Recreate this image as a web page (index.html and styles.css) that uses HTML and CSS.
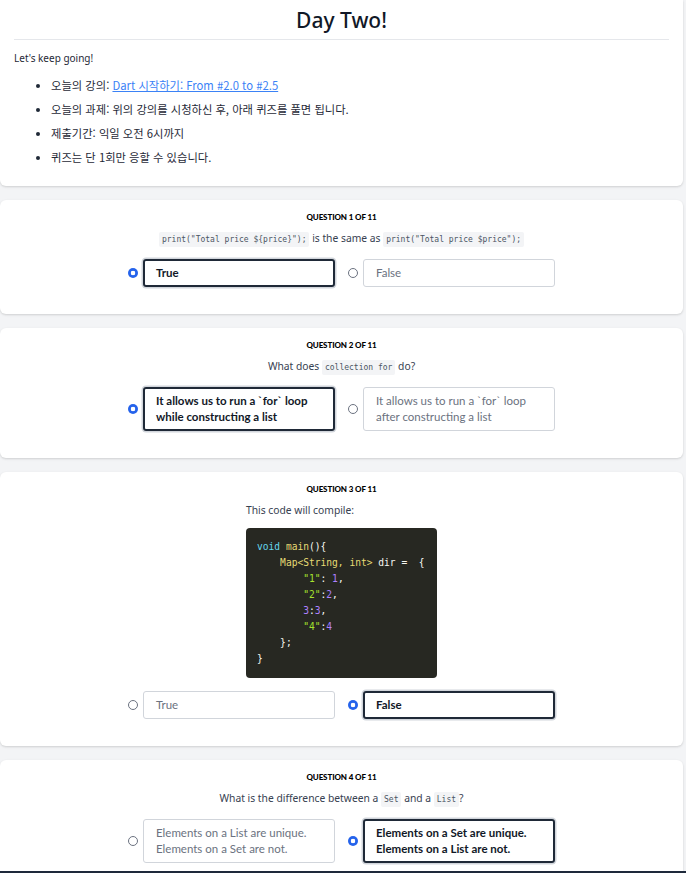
FILE: index.html
```html
<!DOCTYPE html>
<html lang="ko">
<head>
<meta charset="utf-8">
<title>Day Two!</title>
<link rel="stylesheet" href="styles.css">
</head>
<body>
<main class="page">
  <section class="card intro">
    <h1 class="title">Day Two!</h1>
    <p class="lead">Let's keep going!</p>
    <ul class="info">
      <li>오늘의 강의: <a href="#" class="link">Dart 시작하기: From #2.0 to #2.5</a></li>
      <li>오늘의 과제: 위의 강의를 시청하신 후, 아래 퀴즈를 풀면 됩니다.</li>
      <li>제출기간: 익일 오전 6시까지</li>
      <li>퀴즈는 단 1회만 응할 수 있습니다.</li>
    </ul>
  </section>

  <section class="card quiz">
    <div class="qlabel">Question 1 of 11</div>
    <div class="question"><code class="ic">print("Total price ${price}");</code> is the same as <code class="ic">print("Total price $price");</code></div>
    <div class="options">
      <label class="option"><span class="radio on"></span><span class="box on">True</span></label>
      <label class="option"><span class="radio"></span><span class="box">False</span></label>
    </div>
  </section>

  <section class="card quiz">
    <div class="qlabel">Question 2 of 11</div>
    <div class="question">What does <code class="ic">collection for</code> do?</div>
    <div class="options">
      <label class="option"><span class="radio on"></span><span class="box on">It allows us to run a `for` loop while constructing a list</span></label>
      <label class="option"><span class="radio"></span><span class="box">It allows us to run a `for` loop after constructing a list</span></label>
    </div>
  </section>

  <section class="card quiz">
    <div class="qlabel">Question 3 of 11</div>
    <div class="question md">
      <p class="md-text">This code will compile:</p>
<pre class="code"><span class="kw">void</span> <span class="fn">main</span>(){
    <span class="ty">Map&lt;String, int&gt;</span> dir =  {
        <span class="st">"1"</span>: <span class="nu">1</span>,
        <span class="st">"2"</span>:<span class="nu">2</span>,
        <span class="nu">3</span>:<span class="nu">3</span>,
        <span class="st">"4"</span>:<span class="nu">4</span>
    };
}</pre>
    </div>
    <div class="options">
      <label class="option"><span class="radio"></span><span class="box">True</span></label>
      <label class="option"><span class="radio on"></span><span class="box on">False</span></label>
    </div>
  </section>

  <section class="card quiz">
    <div class="qlabel">Question 4 of 11</div>
    <div class="question">What is the difference between a <code class="ic">Set</code> and a <code class="ic">List</code>?</div>
    <div class="options">
      <label class="option"><span class="radio"></span><span class="box">Elements on a List are unique. Elements on a Set are not.</span></label>
      <label class="option"><span class="radio on"></span><span class="box on">Elements on a Set are unique. Elements on a List are not.</span></label>
    </div>
  </section>
</main>
<div class="bottombar"></div>
</body>
</html>
```

FILE: styles.css
```css
* { box-sizing: border-box; }

html, body {
  margin: 0;
  padding: 0;
  background: #f3f4f6;
}

body {
  font-family: "Noto Sans", "Noto Sans CJK KR", sans-serif;
  color: #1f2937;
}

.page {
  width: 683px;
  display: flex;
  flex-direction: column;
  gap: 14px;
  padding-bottom: 40px;
}

.card {
  background: #fff;
  border-radius: 6px;
  box-shadow: 0 1px 3px rgba(0, 0, 0, 0.10), 0 1px 2px rgba(0, 0, 0, 0.06);
}

/* intro card */
.intro {
  border-radius: 0 0 6px 6px;
  padding: 0 14px 20px;
  height: 186px;
}

.title {
  margin: 0;
  padding-top: 6px;
  padding-bottom: 5px;
  border-bottom: 1px solid #e5e7eb;
  text-align: center;
  font-family: "Noto Sans", sans-serif;
  font-weight: 500;
  font-size: 21px;
  line-height: 28px;
  color: #111827;
}

.lead {
  margin: 10px 0 0;
  font-size: 10px;
  line-height: 16px;
  color: #1f2937;
}

.info {
  margin: 11px 0 0;
  padding-left: 37px;
  font-family: "Noto Sans CJK KR", "Noto Sans", sans-serif;
  font-size: 11.3px;
  line-height: 16px;
  color: #1f2937;
}

.info li { margin-bottom: 8px; }
.info li:last-child { margin-bottom: 0; }

.link {
  color: #3b82f6;
  text-decoration: underline;
}

/* quiz cards */
.quiz {
  padding: 11px 0 27px;
  display: flex;
  flex-direction: column;
  align-items: center;
}

.qlabel {
  font-family: "Lato", sans-serif;
  font-weight: 900;
  font-size: 8px;
  line-height: 12px;
  text-transform: uppercase;
  color: #000;
  letter-spacing: -0.1px;
}

.question {
  margin-top: 7px;
  font-family: "Noto Sans", sans-serif;
  font-size: 10.3px;
  line-height: 16px;
  color: #374151;
  text-align: center;
}

.ic {
  font-family: "DejaVu Sans Mono", monospace;
  font-size: 8px;
  line-height: 10px;
  background: #f3f4f6;
  color: #4b5563;
  padding: 3px 3px;
  border-radius: 2px;
}

.md {
  text-align: left;
  width: 191px;
}

.md-text {
  margin: 0;
  color: #374151;
}

.code {
  margin: 10px 0 0;
  background: #272822;
  color: #f8f8f2;
  border-radius: 4px;
  padding: 11px 11px;
  height: 150px;
  font-family: "DejaVu Sans Mono", monospace;
  font-size: 9.6px;
  line-height: 16px;
  overflow: hidden;
}

.kw { color: #66d9ef; }
.fn { color: #e6db74; }
.ty { color: #e6db74; }
.st { color: #a6e22e; }
.nu { color: #ae81ff; }

.options {
  margin-top: 13px;
  display: grid;
  grid-template-columns: 207px 207px;
  column-gap: 13px;
}

.option {
  display: flex;
  align-items: center;
  gap: 5px;
}

.radio {
  flex: none;
  width: 10px;
  height: 10px;
  border-radius: 50%;
  border: 1px solid #6b7280;
  background: #fff;
}

.radio.on {
  border: none;
  background: radial-gradient(circle, #fff 0 2px, #2563eb 2.6px);
}

.box {
  flex: 1;
  display: block;
  border: 1px solid #d1d5db;
  border-radius: 3px;
  padding: 5px 12px;
  min-height: 28px;
  font-family: "Lato", sans-serif;
  font-size: 11.5px;
  line-height: 16px;
  color: #6b7280;
}

.box.on {
  border: 2px solid #1f2937;
  padding: 4px 11px;
  box-shadow: 0 0 0 1.5px #d1d5db;
  font-weight: 700;
  color: #111827;
}

.bottombar {
  position: fixed;
  left: 0;
  right: 0;
  bottom: 0;
  height: 2px;
  background: #1e293b;
}
```
